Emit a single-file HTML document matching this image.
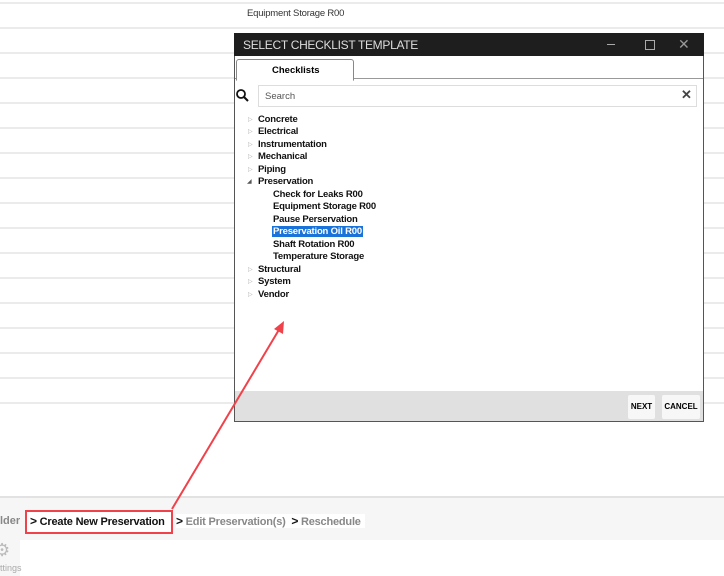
<!DOCTYPE html><html><head><style>
body{margin:0;width:724px;height:576px;position:relative;overflow:hidden;background:#fff;font-family:"Liberation Sans",sans-serif}
.ln{position:absolute;left:0;width:724px;height:2px;background:#ebebeb}
.a{position:absolute}
.t{position:absolute;font-size:9.5px;font-weight:bold;color:#111;white-space:nowrap;letter-spacing:-0.2px}
.tri{position:absolute;font-size:6px;color:#aaa}
</style></head><body>
<div class="ln" style="top:2px"></div><div class="ln" style="top:27px"></div><div class="ln" style="top:52px"></div><div class="ln" style="top:77px"></div><div class="ln" style="top:102px"></div><div class="ln" style="top:127px"></div><div class="ln" style="top:152px"></div><div class="ln" style="top:177px"></div><div class="ln" style="top:202px"></div><div class="ln" style="top:227px"></div><div class="ln" style="top:252px"></div><div class="ln" style="top:277px"></div><div class="ln" style="top:302px"></div><div class="ln" style="top:327px"></div><div class="ln" style="top:352px"></div><div class="ln" style="top:377px"></div><div class="ln" style="top:402px"></div>
<div class="a" style="left:247px;top:8px;font-size:9.5px;color:#333;letter-spacing:-0.2px">Equipment Storage R00</div>

<div class="a" style="left:234px;top:33px;width:468px;height:388px;border:1px solid #555;border-top:none;background:#fff">
 <div class="a" style="left:-1px;top:0;width:470px;height:23px;background:#1e1e1e"></div>
 <div class="a" style="left:8px;top:5px;font-size:12px;color:#ddd;letter-spacing:-0.3px">SELECT CHECKLIST TEMPLATE</div>
 <div class="a" style="left:372px;top:11px;width:8px;height:1px;background:#aaa"></div>
 <div class="a" style="left:410px;top:7px;width:8px;height:8px;border:1px solid #aaa"></div>
 <div class="a" style="left:443px;top:3px;font-size:14px;color:#999">✕</div>
 <div class="a" style="left:0;top:45px;width:468px;height:1px;background:#999"></div>
 <div class="a" style="left:1px;top:26px;width:116px;height:20px;border:1px solid #888;border-bottom:1px solid #fff;border-radius:3px 3px 0 0;background:#fff"></div>
 <div class="a" style="left:37px;top:32px;font-size:9.5px;font-weight:bold">Checklists</div>
 <svg class="a" style="left:0;top:55px" width="14" height="14"><circle cx="6" cy="6" r="4" fill="none" stroke="#111" stroke-width="1.8"/><line x1="9" y1="9" x2="13" y2="13" stroke="#111" stroke-width="2"/></svg>
 <div class="a" style="left:23px;top:52px;width:437px;height:20px;border:1px solid #ddd"></div>
 <div class="a" style="left:30px;top:58px;font-size:9.5px;color:#555">Search</div>
 <div class="a" style="left:446px;top:54px;font-size:13px;font-weight:bold;color:#444">✕</div>
 <div class="tri" style="left:13px;top:83px">▷</div><div class="t" style="left:23px;top:81px">Concrete</div>
 <div class="tri" style="left:13px;top:95px">▷</div><div class="t" style="left:23px;top:93px">Electrical</div>
 <div class="tri" style="left:13px;top:108px">▷</div><div class="t" style="left:23px;top:106px">Instrumentation</div>
 <div class="tri" style="left:13px;top:120px">▷</div><div class="t" style="left:23px;top:118px">Mechanical</div>
 <div class="tri" style="left:13px;top:133px">▷</div><div class="t" style="left:23px;top:131px">Piping</div>
 <div class="tri" style="left:12px;top:145px;color:#555">◢</div><div class="t" style="left:23px;top:143px">Preservation</div>
 <div class="t" style="left:38px;top:156px">Check for Leaks R00</div>
 <div class="t" style="left:38px;top:168px">Equipment Storage R00</div>
 <div class="t" style="left:38px;top:181px">Pause Perservation</div>
 <div class="t" style="left:37px;top:193px;background:#1a73d9;color:#fff;padding:0 1px">Preservation Oil R00</div>
 <div class="t" style="left:38px;top:206px">Shaft Rotation R00</div>
 <div class="t" style="left:38px;top:218px">Temperature Storage</div>
 <div class="tri" style="left:13px;top:233px">▷</div><div class="t" style="left:23px;top:231px">Structural</div>
 <div class="tri" style="left:13px;top:245px">▷</div><div class="t" style="left:23px;top:243px">System</div>
 <div class="tri" style="left:13px;top:258px">▷</div><div class="t" style="left:23px;top:256px">Vendor</div>
 <div class="a" style="left:0;top:358px;width:468px;height:30px;background:#e0e0e0"></div>
 <div class="a" style="left:393px;top:362px;width:27px;height:24px;background:#f7f7f7;border-radius:2px;font-size:8px;font-weight:bold;line-height:24px;text-align:center">NEXT</div>
 <div class="a" style="left:427px;top:362px;width:38px;height:24px;background:#f7f7f7;border-radius:2px;font-size:8px;font-weight:bold;line-height:24px;text-align:center">CANCEL</div>
</div>

<div class="a" style="left:0;top:496px;width:724px;height:42px;background:#f6f6f6;border-top:2px solid #e2e2e2"></div>
<div class="a" style="left:0;top:538px;width:20px;height:38px;background:#f6f6f6"></div>
<div class="a" style="left:0;top:515px;font-size:11px;font-weight:bold;color:#888">lder</div>
<div class="a" style="left:25px;top:510px;width:144px;height:20px;border:2px solid #f0424a;background:#fff"></div>
<div class="a" style="left:30px;top:514px;font-size:11px;font-weight:bold;color:#111;letter-spacing:-0.2px"><b style="font-size:12px">&gt;</b> Create New Preservation</div>
<div class="a" style="left:176px;top:514px;font-size:11px;font-weight:bold;color:#888;background:#fff;padding-right:4px;letter-spacing:-0.2px"><span style="color:#111;font-size:12px">&gt;</span> Edit Preservation(s) &nbsp;<span style="color:#111;font-size:12px">&gt;</span> Reschedule</div>
<div class="a" style="left:-6px;top:540px;font-size:18px;color:#bbb">⚙</div>
<div class="a" style="left:0;top:563px;font-size:9px;color:#aaa">ttings</div>

<svg class="a" style="left:0;top:0" width="724" height="576"><line x1="172" y1="509" x2="280" y2="328" stroke="#f0424a" stroke-width="2"/><polygon points="284,321 283,334 274,329" fill="#f0424a"/></svg>
</body></html>
